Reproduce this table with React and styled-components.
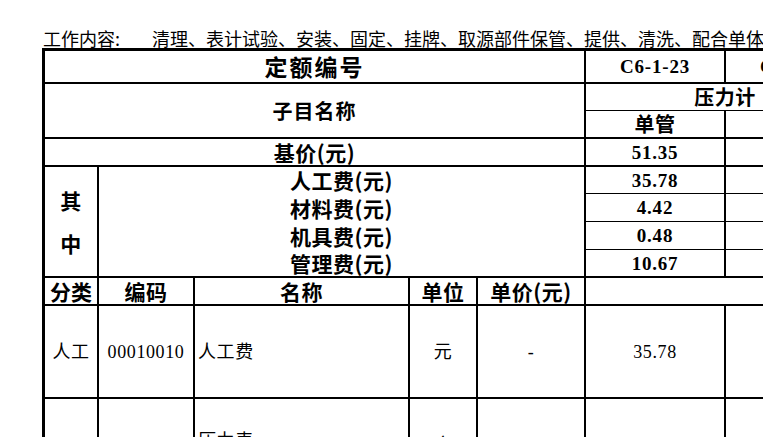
import styled, { createGlobalStyle } from "styled-components";

const GlobalStyle = createGlobalStyle`
  html, body {
    margin: 0;
    background: #fff;
    overflow: hidden;
  }
  body {
    font-family: "Noto Sans CJK SC", sans-serif;
    color: #000;
  }
`;

const Page = styled.div`
  box-sizing: border-box;
  width: 763px;
  height: 437px;
  overflow: hidden;
  padding: 27px 0 0 42px;
`;

const WorkLine = styled.div`
  display: flex;
  align-items: center;
  gap: 32px;
  height: 21px;
  padding-left: 1px;
  font-size: 18px;
  line-height: 1;
  white-space: nowrap;
`;

const Sheet = styled.div`
  display: grid;
  grid-template-columns: 54px 96px 215px 68px 108px 140px 140px;
  grid-template-rows: 33px 27px 28px 28px 27px 28px 28px 28px 28px 93px 93px;
  width: max-content;
  border-top: 3px solid #000;
  border-left: 3px solid #000;
`;

const edges = { none: "0", thin: "1px", thick: "2px" };

const Cell = styled.div`
  grid-column: span ${(p) => p.$cols || 1};
  grid-row: span ${(p) => p.$rows || 1};
  box-sizing: border-box;
  display: flex;
  flex-direction: ${(p) => (p.$stack ? "column" : "row")};
  gap: ${(p) => (p.$stack ? "22px" : "0")};
  align-items: center;
  justify-content: ${(p) => (p.$left && !p.$stack ? "flex-start" : "center")};
  padding: ${(p) => p.$drop || 0}px 3px 0;
  border-right: 2px solid #000;
  border-bottom: ${(p) => edges[p.$edge || "thick"]} solid #000;
  overflow: hidden;
  white-space: nowrap;
`;

const Heading = styled.span`
  font-family: "Noto Sans CJK SC", sans-serif;
  font-weight: 700;
  font-size: ${(p) => p.$size || 21}px;
  letter-spacing: ${(p) => p.$spacing ?? 0.5}px;
  line-height: 1;
`;

const Figure = styled.span`
  font-family: "Liberation Serif", "Noto Sans CJK SC", serif;
  font-weight: 700;
  font-size: 19px;
  letter-spacing: 0.8px;
  line-height: 1;
`;

const Plain = styled.span`
  font-family: "Liberation Serif", "Noto Sans CJK SC", serif;
  font-size: 18px;
  letter-spacing: 0.6px;
  line-height: 1;
  white-space: pre-line;
`;

const labels = ["人工费(元)", "材料费(元)", "机具费(元)", "管理费(元)"];
const main = ["35.78", "4.42", "0.48", "10.67"];
const next = ["43.10", "5.26", "0.52", "12.81"];

const App = () => {
  return (
    <>
      <GlobalStyle />
      <Page>
        <WorkLine>
          <span>工作内容:</span>
          <span>
            清理、表计试验、安装、固定、挂牌、取源部件保管、提供、清洗、配合单体调试
          </span>
        </WorkLine>
        <Sheet>
          <Cell $cols={5}>
            <Heading $size={23} $spacing={2}>定额编号</Heading>
          </Cell>
          <Cell>
            <Figure>C6-1-23</Figure>
          </Cell>
          <Cell>
            <Figure>C6-1-24</Figure>
          </Cell>

          <Cell $cols={5} $rows={2}>
            <Heading $size={20} $spacing={1}>子目名称</Heading>
          </Cell>
          <Cell $cols={2} $edge="thin">
            <Heading $size={20}>压力计</Heading>
          </Cell>
          <Cell>
            <Heading $size={20}>单管</Heading>
          </Cell>
          <Cell>
            <Heading $size={20}>双管</Heading>
          </Cell>

          <Cell $cols={5}>
            <Heading>基价(元)</Heading>
          </Cell>
          <Cell>
            <Figure>51.35</Figure>
          </Cell>
          <Cell>
            <Figure>61.69</Figure>
          </Cell>

          <Cell $rows={4} $stack>
            <Heading>其</Heading>
            <Heading>中</Heading>
          </Cell>
          {labels.map((label, i) => {
            const last = i === labels.length - 1;
            return [
              <Cell key={label} $cols={4} $edge={last ? "thick" : "none"}>
                <Heading>{label}</Heading>
              </Cell>,
              <Cell key={label + "a"} $edge={last ? "thick" : "thin"}>
                <Figure>{main[i]}</Figure>
              </Cell>,
              <Cell key={label + "b"} $edge={last ? "thick" : "thin"}>
                <Figure>{next[i]}</Figure>
              </Cell>,
            ];
          })}

          <Cell>
            <Heading $spacing={0}>分类</Heading>
          </Cell>
          <Cell>
            <Heading>编码</Heading>
          </Cell>
          <Cell>
            <Heading>名称</Heading>
          </Cell>
          <Cell>
            <Heading>单位</Heading>
          </Cell>
          <Cell>
            <Heading>单价(元)</Heading>
          </Cell>
          <Cell $cols={2} />

          <Cell>
            <Plain>人工</Plain>
          </Cell>
          <Cell>
            <Plain>00010010</Plain>
          </Cell>
          <Cell $left>
            <Plain>人工费</Plain>
          </Cell>
          <Cell>
            <Plain>元</Plain>
          </Cell>
          <Cell>
            <Plain>-</Plain>
          </Cell>
          <Cell>
            <Plain>35.78</Plain>
          </Cell>
          <Cell />

          <Cell />
          <Cell />
          <Cell $left $drop={10}>
            <Plain>{"压力表\n(含表弯)"}</Plain>
          </Cell>
          <Cell>
            <Plain>个</Plain>
          </Cell>
          <Cell />
          <Cell />
          <Cell />
        </Sheet>
      </Page>
    </>
  );
};

export default App;
